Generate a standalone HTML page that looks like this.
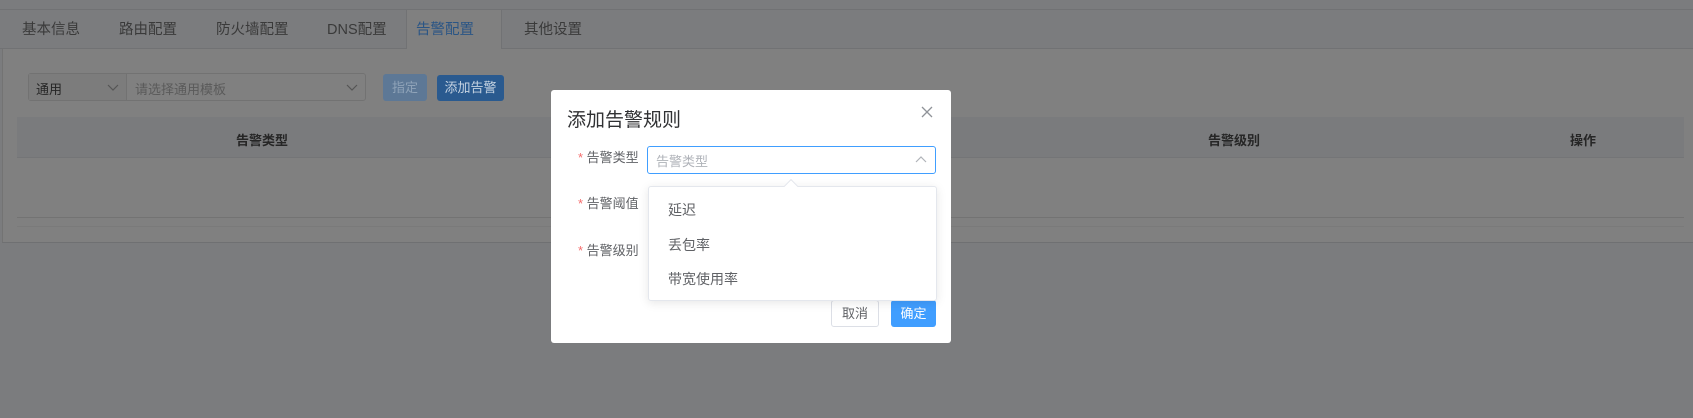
<!DOCTYPE html>
<html><head><meta charset="utf-8"><style>
*{margin:0;padding:0;box-sizing:border-box}
body{width:1693px;height:418px;background:#7b7c7e;position:relative;overflow:hidden;font-family:"Liberation Sans","Noto Sans CJK SC",sans-serif;font-size:14px;color:#2a2a2a}
.a{position:absolute}
.tabbar{left:0;top:9px;width:1693px;height:40px;border-top:1px solid #717274;border-bottom:1px solid #717274;background:#7b7c7e}
.tab{top:18px;font-size:14.5px;color:#3a3a3a}
.content{left:2px;top:49px;width:1691px;height:194px;background:#808080;border-left:1px solid #737373;border-bottom:1px solid #6f7072}
.modal{left:551px;top:90px;width:400px;height:253px;background:#fff;border-radius:3px}
.lbl{font-size:13px;color:#606266}
.star{color:#f56c6c}
</style></head><body>
<div class="a tabbar"></div>
<div class="a" style="left:406px;top:9px;width:96px;height:41px;background:#808080;border:1px solid #717274;border-bottom:none"></div>
<div class="a tab" style="left:22px">基本信息</div>
<div class="a tab" style="left:119px">路由配置</div>
<div class="a tab" style="left:216px">防火墙配置</div>
<div class="a tab" style="left:327px">DNS配置</div>
<div class="a tab" style="left:416px;color:#2a5585">告警配置</div>
<div class="a tab" style="left:524px">其他设置</div>
<div class="a content"></div>
<div class="a" style="left:28px;top:73px;width:338px;height:28px;border:1px solid #727272;border-radius:3px;background:#808080"></div>
<div class="a" style="left:29px;top:74px;width:98px;height:26px;background:#7c7c7c;border-right:1px solid #727272"></div>
<div class="a" style="left:36px;top:79px;font-size:13px;color:#252525">通用</div>
<svg class="a" style="left:107px;top:84px" width="12" height="7"><path d="M1 1L6 6L11 1" stroke="#555" fill="none" stroke-width="1.2"/></svg>
<div class="a" style="left:135px;top:79px;font-size:13px;color:#5a5a5a">请选择通用模板</div>
<svg class="a" style="left:346px;top:84px" width="12" height="7"><path d="M1 1L6 6L11 1" stroke="#555" fill="none" stroke-width="1.2"/></svg>
<div class="a" style="left:383px;top:74px;width:44px;height:27px;background:#5d7896;border-radius:3px;color:#8fa3b8;font-size:13px;text-align:center;line-height:27px">指定</div>
<div class="a" style="left:437px;top:75px;width:67px;height:26px;background:#2a5a8f;border-radius:3px;color:#c5d3e2;font-size:13px;text-align:center;line-height:26px">添加告警</div>
<div class="a" style="left:17px;top:117px;width:1667px;height:110px;background:#808080;border-bottom:1px solid #7a7a7a"></div>
<div class="a" style="left:17px;top:117px;width:1667px;height:41px;background:#7a7b7d;border-bottom:1px solid #747577"></div>
<div class="a" style="left:17px;top:217px;width:1667px;height:1px;background:#737373"></div>
<div class="a" style="left:236px;top:130px;font-size:13px;font-weight:bold;color:#262626">告警类型</div>
<div class="a" style="left:1208px;top:130px;font-size:13px;font-weight:bold;color:#262626">告警级别</div>
<div class="a" style="left:1570px;top:130px;font-size:13px;font-weight:bold;color:#262626">操作</div>

<div class="a modal"></div>
<div class="a" style="left:567px;top:105px;font-size:19px;color:#303133">添加告警规则</div>
<svg class="a" style="left:921px;top:106px" width="12" height="12"><path d="M1 1L11 11M11 1L1 11" stroke="#909399" stroke-width="1.3"/></svg>
<div class="a lbl" style="left:578px;top:147px"><span class="star">*</span> 告警类型</div>
<div class="a lbl" style="left:578px;top:193px"><span class="star">*</span> 告警阈值</div>
<div class="a lbl" style="left:578px;top:240px"><span class="star">*</span> 告警级别</div>
<div class="a" style="left:647px;top:146px;width:289px;height:28px;border:1px solid #409eff;border-radius:3px"></div>
<div class="a" style="left:656px;top:151px;font-size:13px;color:#b0b3b9">告警类型</div>
<svg class="a" style="left:915px;top:155px" width="12" height="8"><path d="M1 7L6 2L11 7" stroke="#b0b3b9" fill="none" stroke-width="1.2"/></svg>
<div class="a" style="left:831px;top:300px;width:48px;height:27px;border:1px solid #dcdfe6;border-radius:3px;font-size:13px;color:#606266;text-align:center;line-height:25px">取消</div>
<div class="a" style="left:891px;top:300px;width:45px;height:27px;background:#409eff;border-radius:3px;font-size:13px;color:#fff;text-align:center;line-height:27px">确定</div>
<div class="a" style="left:648px;top:186px;width:289px;height:115px;background:#fff;border:1px solid #e4e7ed;border-radius:3px;box-shadow:0 2px 10px rgba(0,0,0,.1)"></div>
<div class="a" style="left:786px;top:181px;width:10px;height:10px;background:#fff;border-left:1px solid #e4e7ed;border-top:1px solid #e4e7ed;transform:rotate(45deg)"></div>
<div class="a" style="left:668px;top:200px;font-size:14px;color:#606266">延迟</div>
<div class="a" style="left:668px;top:235px;font-size:14px;color:#606266">丢包率</div>
<div class="a" style="left:668px;top:269px;font-size:14px;color:#606266">带宽使用率</div>
</body></html>
